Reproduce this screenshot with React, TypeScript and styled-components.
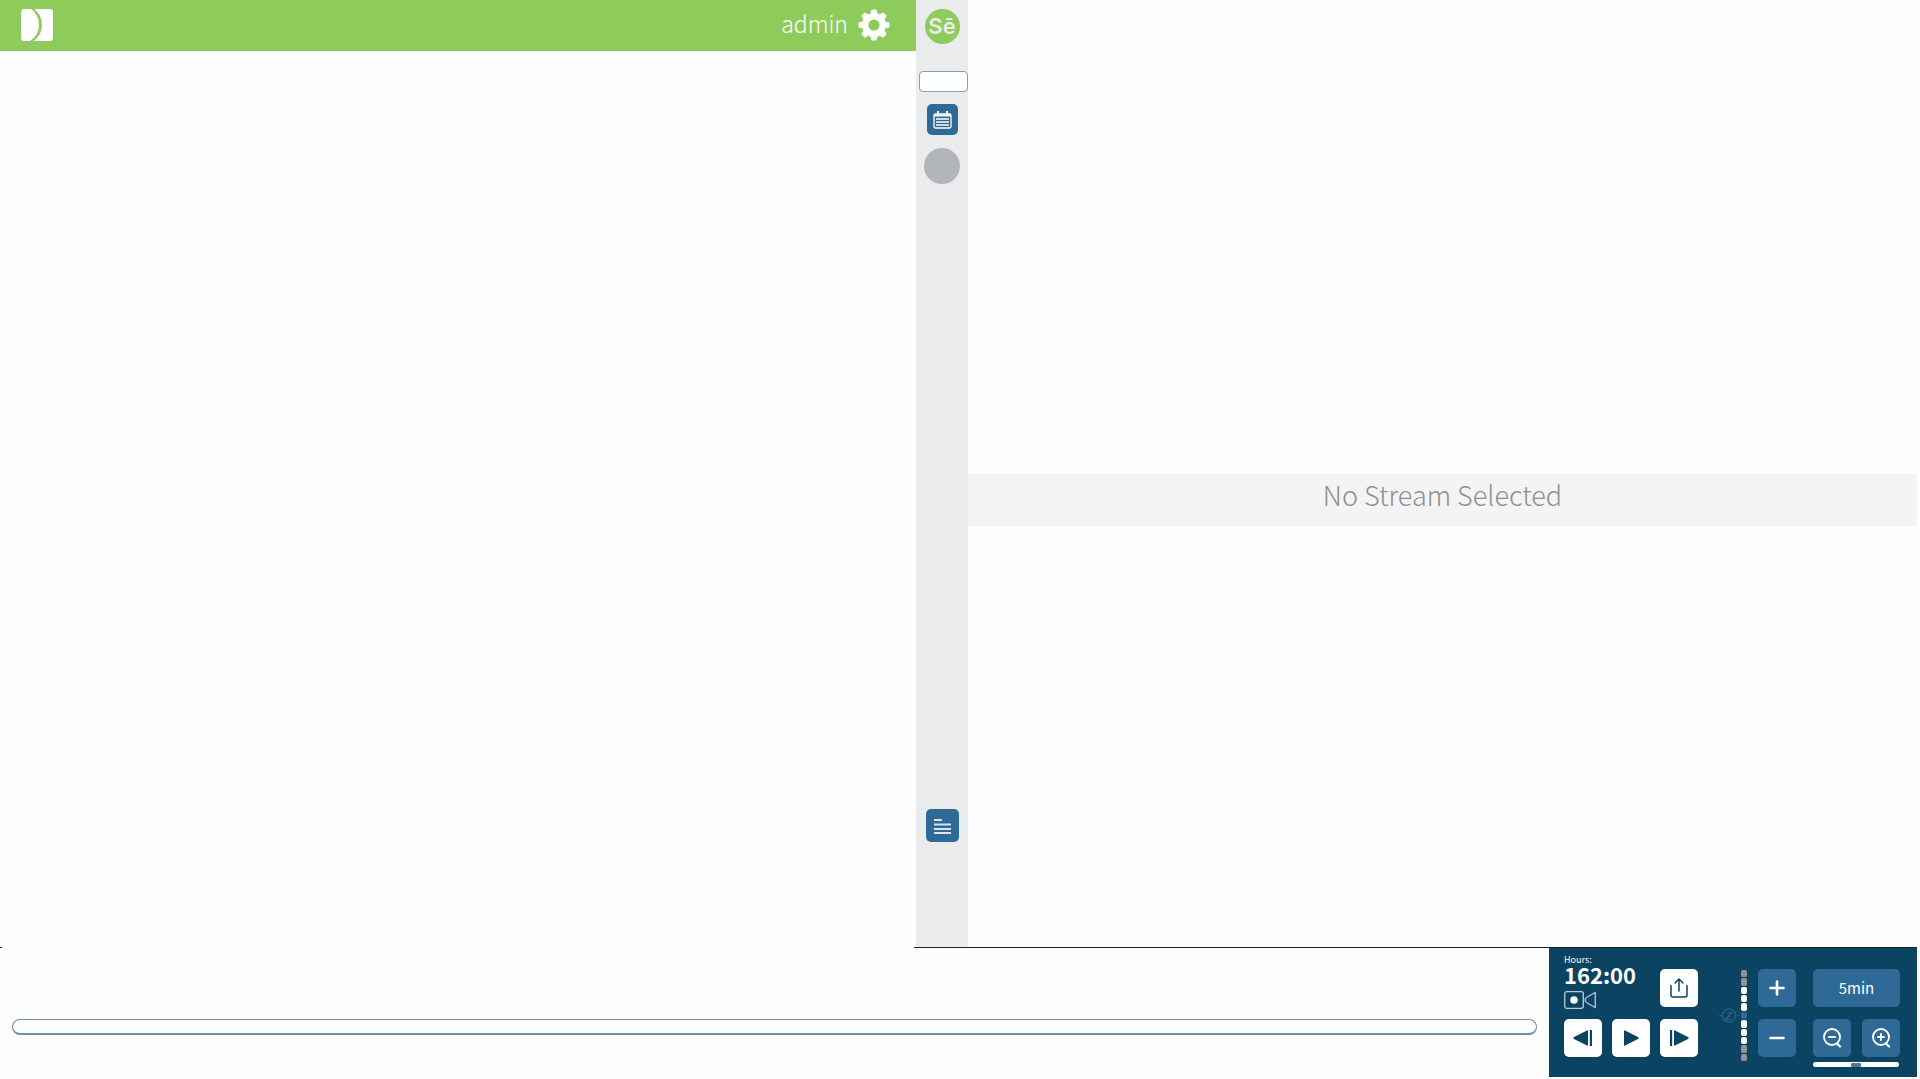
import React, { useState } from "react";
import styled, { createGlobalStyle } from "styled-components";

const Global = createGlobalStyle`
  *, *::before, *::after { box-sizing: border-box; }
  body {
    margin: 0;
    background: #fefefe;
    font-family: "Noto Sans CJK SC", "Noto Sans", sans-serif;
  }
  button, input { font: inherit; margin: 0; }
`;

const color = {
  green: "#8dcc5b",
  rail: "#eaebed",
  blue: "#2f6a96",
  navy: "#0b4462",
};

const columns = "minmax(0, 916fr) 52px minmax(0, 949fr)";

const Page = styled.div`
  display: flex;
  flex-direction: column;
  min-height: 100vh;
  padding: 0 3px 2px 0;
`;

const Main = styled.main`
  flex: 1;
  display: grid;
  grid-template-columns: ${columns};
`;

const Header = styled.header`
  display: flex;
  align-items: center;
  justify-content: space-between;
  height: 51px;
  padding: 0 26px 2px 21px;
  background: ${color.green};
  color: #fff;
`;

const Account = styled.div`
  display: flex;
  align-items: center;
  gap: 10px;
  font-size: 23px;
  font-weight: 300;
  line-height: 32px;
`;

const AccountName = styled.span`
  padding-bottom: 4px;
`;

const PlainButton = styled.button`
  display: flex;
  padding: 0;
  border: 0;
  background: none;
  color: inherit;
  cursor: pointer;
`;

const Rail = styled.aside`
  display: flex;
  flex-direction: column;
  align-items: center;
  padding: 9px 0 105px;
  background: ${color.rail};
`;

const Badge = styled.div`
  display: flex;
  align-items: center;
  justify-content: center;
  width: 35px;
  height: 35px;
  border-radius: 50%;
  background: ${color.green};
  color: ${color.rail};
  font: 600 22px/35px Inter, sans-serif;
`;

const DateField = styled.input`
  align-self: flex-end;
  width: 49px;
  height: 21px;
  margin: 27px 0 12px;
  padding: 0 4px;
  border: 1px solid #7fa0bc;
  border-radius: 4px;
  background: #fff;
  font-size: 12px;
`;

const RailButton = styled.button<{ $size: number }>`
  display: flex;
  align-items: center;
  justify-content: center;
  width: ${(p) => p.$size}px;
  height: ${(p) => p.$size}px;
  padding: 0;
  border: 0;
  border-radius: 5px;
  background: ${color.blue};
  color: #fff;
  cursor: pointer;
`;

const StatusDot = styled.div`
  width: 36px;
  height: 36px;
  margin: 13px 0 auto;
  border-radius: 50%;
  background: #b2b6b8;
`;

const Stream = styled.section`
  display: flex;
  flex-direction: column;
  justify-content: center;
  padding-top: 52px;
`;

const StreamMessage = styled.p`
  margin: 0;
  padding-bottom: 10px;
  background: #f4f4f4;
  color: #8f8f8f;
  font-size: 27px;
  font-weight: 300;
  line-height: 42px;
  text-align: center;
`;

const Divider = styled.div`
  display: grid;
  grid-template-columns: ${columns};
  height: 1px;
  background: #222;
`;

const DividerGap = styled.div`
  margin: 0 2px;
  background: #fefefe;
`;

const Footer = styled.footer`
  display: flex;
  height: 129px;
`;

const Timeline = styled.div`
  flex: 1;
  padding: 71px 12px 0;
`;

const Track = styled.div`
  height: 16px;
  border: 1px solid #6f8fa5;
  border-bottom-width: 2px;
  border-radius: 8px;
`;

const Panel = styled.section`
  display: flex;
  padding: 0 17px 0 15px;
  background: ${color.navy};
  color: #fff;
`;

const Transport = styled.div`
  display: grid;
  grid-template-columns: repeat(3, 38px);
  grid-template-rows: 59px 38px;
  gap: 12px 10px;
`;

const Readout = styled.div`
  grid-column: span 2;
  padding-top: 7px;

  svg { display: block; }
`;

const ReadoutLabel = styled.div`
  font-size: 9px;
  line-height: 10px;
`;

const ReadoutValue = styled.div`
  margin-bottom: 8px;
  font-size: 22px;
  font-weight: 700;
  line-height: 18px;
`;

const KeyButton = styled.button<{ $light?: boolean; $wide?: boolean }>`
  display: flex;
  align-items: center;
  justify-content: center;
  align-self: end;
  grid-column: ${(p) => (p.$wide ? "span 2" : "auto")};
  height: 38px;
  padding: 0;
  border: 0;
  border-radius: 5px;
  background: ${(p) => (p.$light ? "#fff" : color.blue)};
  color: ${(p) => (p.$light ? color.navy : "#fff")};
  font-size: 15px;
  line-height: 20px;
  cursor: pointer;
`;

const Levels = styled.div`
  display: flex;
  align-items: flex-start;
  gap: 2px;
  margin-left: 21px;
  padding-top: 22px;
`;

const Meter = styled.div`
  display: grid;
  grid-template-rows: repeat(11, 1fr);
  gap: 1px;
  width: 6px;
  height: 91px;
`;

const Segment = styled.div<{ $tone: string }>`
  border-radius: 2px;
  background: ${(p) => p.$tone};
`;

const StepKeys = styled.div`
  display: grid;
  grid-template-columns: 38px;
  grid-template-rows: 59px 38px;
  gap: 12px;
  margin-left: 11px;
`;

const ScaleKeys = styled.div`
  display: grid;
  grid-template-columns: 38px 38px;
  grid-template-rows: 59px 38px 5px;
  gap: 12px 11px;
  margin-left: 17px;
`;

const Range = styled.input`
  grid-column: span 2;
  width: 86px;
  height: 5px;
  margin-top: -7px;
  appearance: none;
  border-radius: 3px;
  background: #fff;
  &::-webkit-slider-thumb {
    appearance: none;
    width: 10px;
    height: 4px;
    border-radius: 1px;
    background: #567890;
  }
`;

const tones: Record<string, string> = { g: "#949494", w: "#ffffff", b: color.blue };
const levels = "ggwwwbwwwgg".split("");

const Logo = () => (
  <svg width="32" height="32" viewBox="0 0 32 32" fill="#fff" aria-hidden="true">
    <path d="M3 0h7Q18 6 18 16T9 32H3a3 3 0 0 1-3-3V3a3 3 0 0 1 3-3z" />
    <path d="M13 0h16a3 3 0 0 1 3 3v26a3 3 0 0 1-3 3H12.500Q21 26 21 16T13 0z" />
  </svg>
);

const Gear = () => (
  <svg width="32" height="32" viewBox="0 0 32 32" aria-hidden="true">
    <g fill="#fff">
      {[0, 45, 90, 135].map((a) => (
        <path key={a} transform={`rotate(${a} 16 16)`} d="M13.200 1.500Q13.300.5 14.300.5h3.400q1 0 1.100 1l.8 4v21l-.8 4q-.1 1-1.100 1h-3.400q-1 0-1.100-1l-.8-4v-21z" />
      ))}
      <circle cx="16" cy="16" r="12" />
    </g>
    <circle cx="16" cy="16" r="5.600" fill={color.green} />
  </svg>
);

const CalendarIcon = () => (
  <svg width="19" height="18" viewBox="0 0 19 18" fill="none" stroke="currentColor" aria-hidden="true">
    <rect x="1" y="3" width="17" height="14" rx="1.500" strokeWidth="1.300" />
    <path d="M1 3.500h17v2H1z" fill="currentColor" stroke="none" />
    <path d="M5 0v4M14 0v4" strokeWidth="2" />
    <path d="M3 8h13M3 11h13M3 14h13" strokeWidth="1.300" />
  </svg>
);

const ListIcon = () => (
  <svg width="17" height="18" viewBox="0 0 17 18" stroke="currentColor" strokeWidth="2" opacity=".82" aria-hidden="true">
    <path d="M0 3h8M0 7.500h17M0 12h17M0 16h17" />
  </svg>
);

const CameraIcon = () => (
  <svg width="33" height="18" viewBox="0 0 33 18" fill="none" stroke="#b9cad4" strokeWidth="1.300" aria-hidden="true">
    <rect x=".7" y=".7" width="18.600" height="16.600" rx="2" />
    <path d="M31.300 1.500v15L24 12.500Q21 11 21 9t3-3.500z" strokeLinejoin="round" />
    <circle cx="10" cy="9" r="3.800" fill="#fff" stroke="none" />
  </svg>
);

const ShareIcon = () => (
  <svg width="18" height="20" viewBox="0 0 18 20" fill="none" stroke="currentColor" strokeWidth="1.500" strokeLinecap="round" strokeLinejoin="round" aria-hidden="true">
    <path d="M1 7.500V17q0 2 2 2h12q2 0 2-2V7.500M9 13V1M5 5l4-4 4 4" />
  </svg>
);

const StepIcon = ({ back }: { back?: boolean }) => (
  <svg width="20" height="16" viewBox="0 0 20 16" fill="currentColor" aria-hidden="true">
    <path
      transform={back ? "translate(20 0) scale(-1 1)" : undefined}
      d="M1 0h2.200v16H1zM5 1Q5 0 6 .4L19 7q1.400 1 0 2L6 15.600Q5 16 5 15z"
    />
  </svg>
);

const PlayIcon = () => (
  <svg width="16" height="16" viewBox="0 0 16 16" fill="currentColor" aria-hidden="true">
    <path d="M1 1Q1 0 2 .4L15 7q1.300 1 0 2L2 15.600Q1 16 1 15z" />
  </svg>
);

const SignIcon = ({ plus }: { plus?: boolean }) => (
  <svg width="16" height="16" viewBox="0 0 16 16" fill="none" stroke="currentColor" strokeWidth="2.600" strokeLinecap="round" aria-hidden="true">
    <path d={plus ? "M1.500 8h13M8 1.500v13" : "M1.500 8h13"} />
  </svg>
);

const LensIcon = ({ plus }: { plus?: boolean }) => (
  <svg width="20" height="20" viewBox="0 0 20 20" fill="none" stroke="currentColor" strokeWidth="1.900" strokeLinecap="round" aria-hidden="true">
    <circle cx="10" cy="9" r="8" />
    <path d="M15 15.500l3 3" strokeWidth="2.200" />
    <path d={plus ? "M7 9h6M10 6v6" : "M7 9h6"} strokeWidth="2" />
  </svg>
);

const ZeroMarker = () => (
  <svg width="20" height="91" viewBox="0 0 20 91" fill="none" aria-hidden="true">
    <rect x="5.500" y="6.500" width="9" height="83" rx="2" stroke="#0a3e5a" />
    <g stroke="#28618a">
      <circle cx="10" cy="45.500" r="6.700" fill={color.navy} strokeWidth="1.300" />
      <path d="M0 45.500h2M18 45.500h2" />
    </g>
    <text x="10" y="49.500" fill="#28618a" fontFamily="Liberation Serif, serif" fontSize="12" fontWeight="700" fontStyle="italic" textAnchor="middle">Z</text>
  </svg>
);

export default function App() {
  const [date, setDate] = useState("");
  const [scale, setScale] = useState(50);
  return (
    <Page>
      <Global />
      <Main>
        <section>
          <Header>
            <Logo />
            <Account>
              <AccountName>admin</AccountName>
              <PlainButton aria-label="Settings"><Gear /></PlainButton>
            </Account>
          </Header>
        </section>
        <Rail>
          <Badge>Sē</Badge>
          <DateField aria-label="Date" value={date} onChange={(e) => setDate(e.target.value)} />
          <RailButton $size={31} aria-label="Calendar"><CalendarIcon /></RailButton>
          <StatusDot />
          <RailButton $size={33} aria-label="Event list"><ListIcon /></RailButton>
        </Rail>
        <Stream>
          <StreamMessage>No Stream Selected</StreamMessage>
        </Stream>
      </Main>
      <Divider><DividerGap /></Divider>
      <Footer>
        <Timeline><Track /></Timeline>
        <Panel>
          <Transport>
            <Readout>
              <ReadoutLabel>Hours:</ReadoutLabel>
              <ReadoutValue>162:00</ReadoutValue>
              <CameraIcon />
            </Readout>
            <KeyButton $light aria-label="Export"><ShareIcon /></KeyButton>
            <KeyButton $light aria-label="Step back"><StepIcon back /></KeyButton>
            <KeyButton $light aria-label="Play"><PlayIcon /></KeyButton>
            <KeyButton $light aria-label="Step forward"><StepIcon /></KeyButton>
          </Transport>
          <Levels>
            <ZeroMarker />
            <Meter>
              {levels.map((l, i) => <Segment key={i} $tone={tones[l]} />)}
            </Meter>
          </Levels>
          <StepKeys>
            <KeyButton aria-label="Increase"><SignIcon plus /></KeyButton>
            <KeyButton aria-label="Decrease"><SignIcon /></KeyButton>
          </StepKeys>
          <ScaleKeys>
            <KeyButton $wide>5min</KeyButton>
            <KeyButton aria-label="Zoom out"><LensIcon /></KeyButton>
            <KeyButton aria-label="Zoom in"><LensIcon plus /></KeyButton>
            <Range type="range" aria-label="Time scale" value={scale} onChange={(e) => setScale(Number(e.target.value))} />
          </ScaleKeys>
        </Panel>
      </Footer>
    </Page>
  );
}
